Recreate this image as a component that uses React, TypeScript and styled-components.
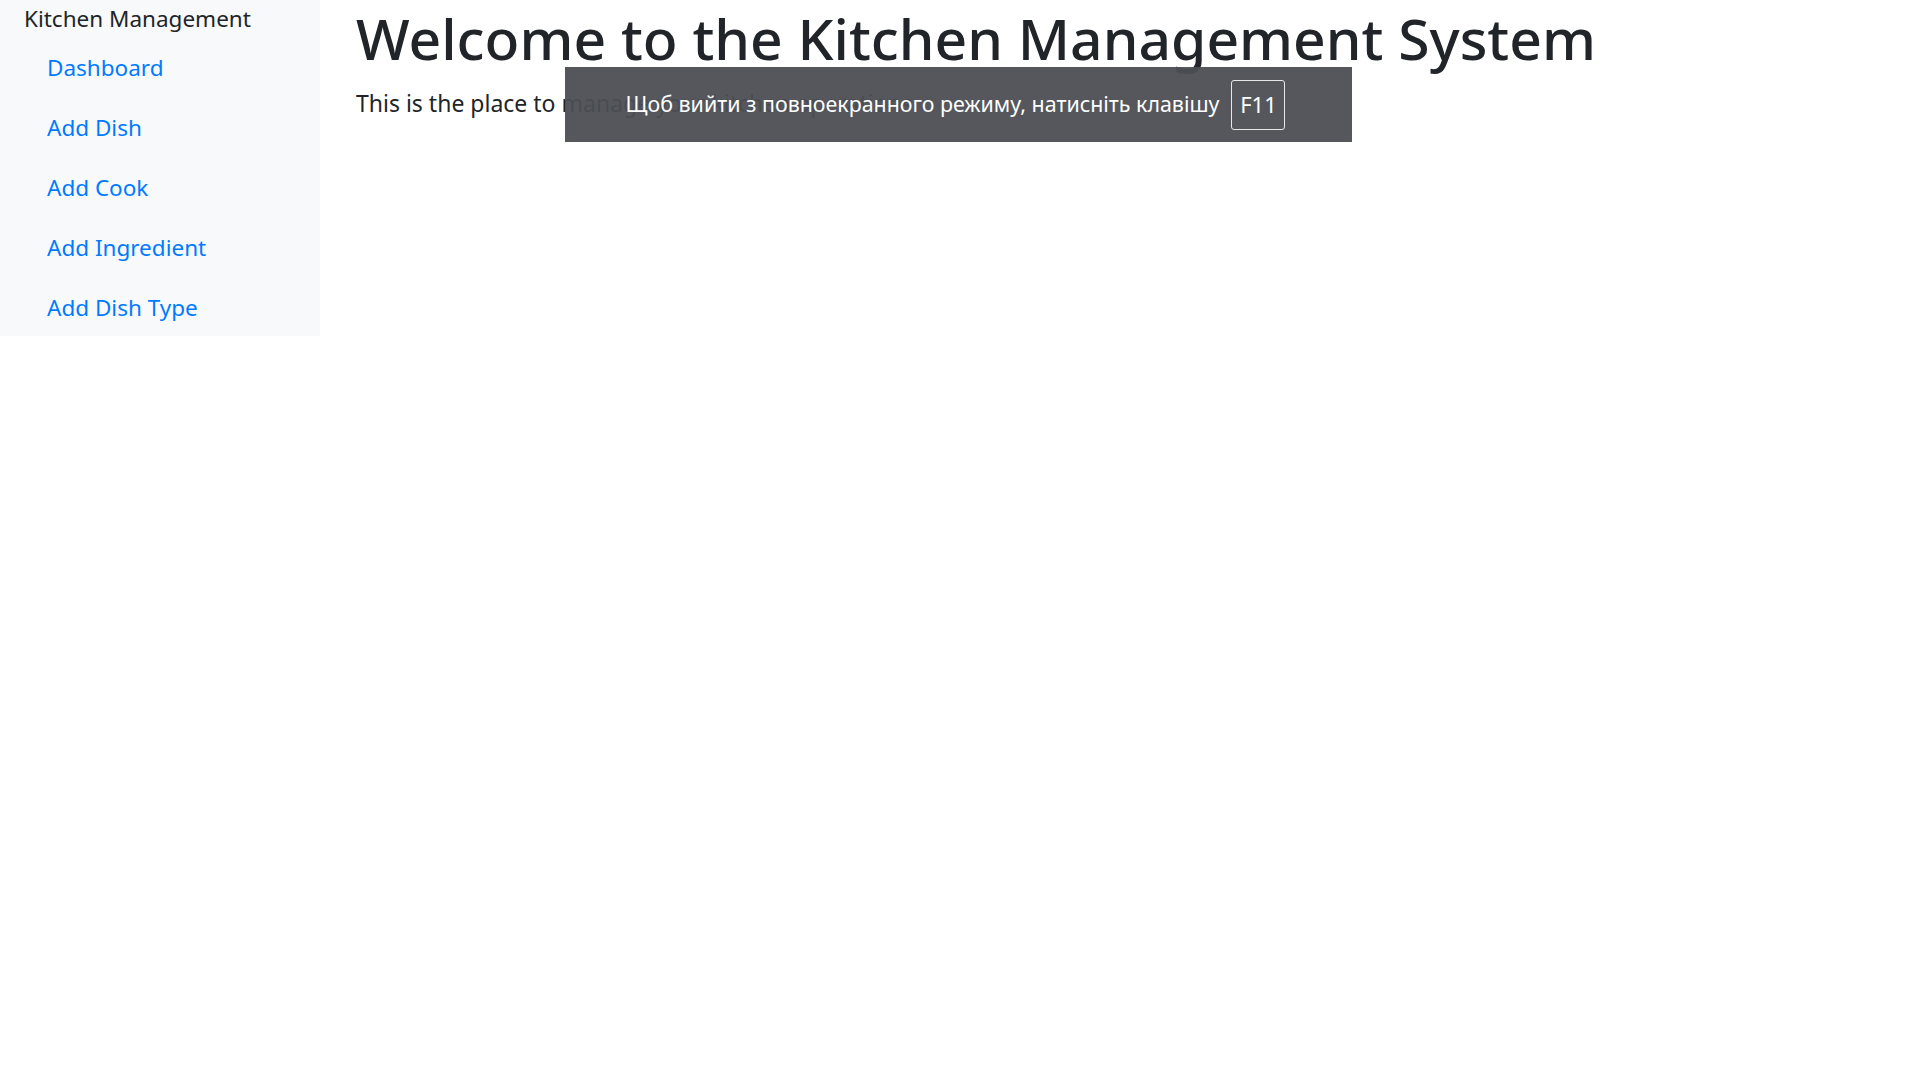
import React from "react";
import styled, { createGlobalStyle } from "styled-components";

const GlobalStyle = createGlobalStyle`
  html, body { margin: 0; padding: 0; background: #ffffff; }
  body {
    font-family: "Noto Sans", "Open Sans", "Liberation Sans", sans-serif;
    color: #212529;
    font-size: 24px;
    line-height: 1.5;
  }
  * { box-sizing: border-box; }
`;

const Page = styled.div`
  position: relative;
  display: flex;
  align-items: flex-start;
  width: 1920px;
  min-height: 1080px;
`;

const Sidebar = styled.nav`
  width: 320px;
  flex: 0 0 320px;
  background: #f8f9fa;
  display: flex;
  flex-direction: column;
`;

const Brand = styled.div`
  padding: 2px 24px 0;
  font-size: 22.5px;
  line-height: 34px;
  color: #212529;
  white-space: nowrap;
`;

const NavList = styled.ul`
  list-style: none;
  margin: 0;
  padding: 0 24px;
  display: flex;
  flex-direction: column;
`;

const NavLink = styled.a`
  display: block;
  padding: 14px 23px 10px;
  font-size: 22.5px;
  line-height: 36px;
  color: #007bff;
  text-decoration: none;
`;

const Main = styled.main`
  flex: 1;
  padding: 0 36px;
`;

const Title = styled.h1`
  margin: 0 0 12px;
  font-size: 57px;
  font-weight: 500;
  line-height: 76px;
  color: #212529;
  white-space: nowrap;
`;

const Lead = styled.p`
  margin: -3px 0 0;
  font-size: 23px;
  line-height: 36px;
`;

const FullscreenNotice = styled.div`
  position: absolute;
  left: 565px;
  top: 67px;
  width: 787px;
  height: 75px;
  background: rgba(76, 78, 83, 0.95);
  color: #ffffff;
  display: flex;
  align-items: center;
  justify-content: center;
  gap: 12px;
  font-size: 21.4px;
  padding-right: 6px;
`;

const Key = styled.span`
  display: inline-flex;
  align-items: center;
  justify-content: center;
  width: 54px;
  height: 50px;
  border: 1.5px solid #e8e8e8;
  border-radius: 3px;
  font-size: 22px;
`;

const links = ["Dashboard", "Add Dish", "Add Cook", "Add Ingredient", "Add Dish Type"];

export default function App() {
  return (
    <>
      <GlobalStyle />
      <Page>
        <Sidebar>
          <Brand>Kitchen Management</Brand>
          <NavList>
            {links.map((l) => (
              <li key={l}>
                <NavLink href="#">{l}</NavLink>
              </li>
            ))}
          </NavList>
        </Sidebar>
        <Main>
          <Title>Welcome to the Kitchen Management System</Title>
          <Lead>This is the place to manage your kitchen operations.</Lead>
        </Main>
        <FullscreenNotice>
          <span>Щоб вийти з повноекранного режиму, натисніть клавішу</span>
          <Key>F11</Key>
        </FullscreenNotice>
      </Page>
    </>
  );
}
